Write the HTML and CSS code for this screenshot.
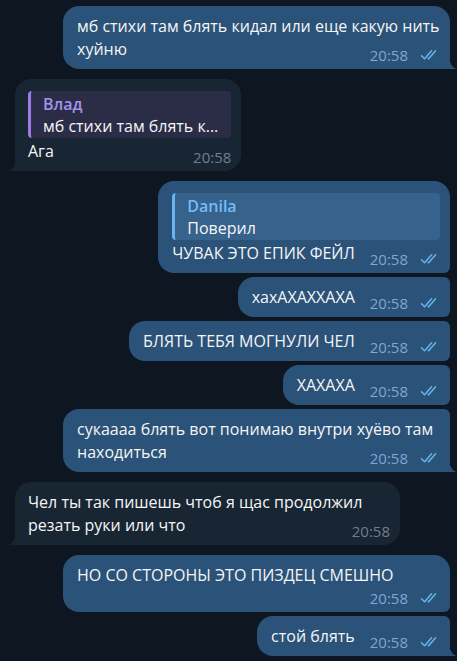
FILE: index.html
```html
<!DOCTYPE html>
<html lang="ru">
<head>
    <meta charset="UTF-8">
    <meta name="viewport" content="width=device-width, initial-scale=1.0">
    <title>Чат</title>
    <link rel="stylesheet" href="styles.css">
</head>
<body>
    <div class="chat">
        <div class="msg out single">
            <div class="bubble">
                <span class="text">мб стихи там блять кидал или еще какую нить хуйню</span>
                <span class="meta"><span class="time">20:58</span><svg class="checks" viewBox="0 0 20 12"><path d="M1.5 6.8 L4.6 9.8 L11.6 1.8"/><path d="M8.2 9.4 L8.6 9.8 L15.6 1.8"/></svg></span>
            </div>
        </div>

        <div class="msg in single group">
            <div class="bubble">
                <div class="reply">
                    <div class="reply-name">Влад</div>
                    <div class="reply-text">мб стихи там блять к...</div>
                </div>
                <span class="text">Ага</span>
                <span class="meta"><span class="time">20:58</span></span>
            </div>
        </div>

        <div class="msg out first group">
            <div class="bubble">
                <div class="reply">
                    <div class="reply-name">Danila</div>
                    <div class="reply-text">Поверил</div>
                </div>
                <span class="text">ЧУВАК ЭТО ЕПИК ФЕЙЛ</span>
                <span class="meta"><span class="time">20:58</span><svg class="checks" viewBox="0 0 20 12"><path d="M1.5 6.8 L4.6 9.8 L11.6 1.8"/><path d="M8.2 9.4 L8.6 9.8 L15.6 1.8"/></svg></span>
            </div>
        </div>
        <div class="msg out middle">
            <div class="bubble">
                <span class="text">хахАХАХХАХА</span>
                <span class="meta"><span class="time">20:58</span><svg class="checks" viewBox="0 0 20 12"><path d="M1.5 6.8 L4.6 9.8 L11.6 1.8"/><path d="M8.2 9.4 L8.6 9.8 L15.6 1.8"/></svg></span>
            </div>
        </div>
        <div class="msg out middle">
            <div class="bubble">
                <span class="text">БЛЯТЬ ТЕБЯ МОГНУЛИ ЧЕЛ</span>
                <span class="meta"><span class="time">20:58</span><svg class="checks" viewBox="0 0 20 12"><path d="M1.5 6.8 L4.6 9.8 L11.6 1.8"/><path d="M8.2 9.4 L8.6 9.8 L15.6 1.8"/></svg></span>
            </div>
        </div>
        <div class="msg out middle">
            <div class="bubble">
                <span class="text">ХАХАХА</span>
                <span class="meta"><span class="time">20:58</span><svg class="checks" viewBox="0 0 20 12"><path d="M1.5 6.8 L4.6 9.8 L11.6 1.8"/><path d="M8.2 9.4 L8.6 9.8 L15.6 1.8"/></svg></span>
            </div>
        </div>
        <div class="msg out last">
            <div class="bubble">
                <span class="text">сукаааа блять вот понимаю внутри хуёво там находиться</span>
                <span class="meta"><span class="time">20:58</span><svg class="checks" viewBox="0 0 20 12"><path d="M1.5 6.8 L4.6 9.8 L11.6 1.8"/><path d="M8.2 9.4 L8.6 9.8 L15.6 1.8"/></svg></span>
            </div>
        </div>

        <div class="msg in single group">
            <div class="bubble">
                <span class="text">Чел ты так пишешь чтоб я щас продолжил резать руки или что</span>
                <span class="meta"><span class="time">20:58</span></span>
            </div>
        </div>

        <div class="msg out first group">
            <div class="bubble">
                <span class="text">НО СО СТОРОНЫ ЭТО ПИЗДЕЦ СМЕШНО</span>
                <span class="meta wrapped"><span class="time">20:58</span><svg class="checks" viewBox="0 0 20 12"><path d="M1.5 6.8 L4.6 9.8 L11.6 1.8"/><path d="M8.2 9.4 L8.6 9.8 L15.6 1.8"/></svg></span>
            </div>
        </div>
        <div class="msg out last">
            <div class="bubble">
                <span class="text">стой блять</span>
                <span class="meta"><span class="time">20:58</span><svg class="checks" viewBox="0 0 20 12"><path d="M1.5 6.8 L4.6 9.8 L11.6 1.8"/><path d="M8.2 9.4 L8.6 9.8 L15.6 1.8"/></svg></span>
            </div>
        </div>
    </div>
</body>
</html>
```

FILE: styles.css
```css
body {
    margin: 0;
    background-color: #0e1621;
    font-family: "Open Sans", "Noto Sans", sans-serif;
    font-size: 16px;
    color: #f5f5f5;
}
.chat {
    display: flex;
    flex-direction: column;
    padding: 6px 7px 0 15px;
}
.msg {
    display: flex;
    margin-top: 4px;
}
.msg:first-child {
    margin-top: 0;
}
.msg.group {
    margin-top: 10px;
}
.msg.out {
    justify-content: flex-end;
}
.bubble {
    position: relative;
    box-sizing: border-box;
    max-width: 387px;
    padding: 9px 10px 6px 14px;
    border-radius: 16px;
    line-height: 23px;
}
.out .bubble {
    background-color: #2b5278;
}
.in .bubble {
    background-color: #182533;
    max-width: 385px;
    padding-left: 13px;
}

/* corners of grouped bubbles */
.out.first .bubble {
    border-bottom-right-radius: 6px;
}
.out.middle .bubble {
    border-top-right-radius: 6px;
    border-bottom-right-radius: 6px;
}
.out.last .bubble {
    border-top-right-radius: 6px;
    border-bottom-right-radius: 0;
}
.out.single .bubble {
    border-bottom-right-radius: 0;
}
.in.single .bubble {
    border-bottom-left-radius: 0;
}

/* tails */
.out.single .bubble::after,
.out.last .bubble::after {
    content: "";
    position: absolute;
    right: -7px;
    bottom: 0;
    width: 8px;
    height: 13px;
    background: radial-gradient(ellipse 8px 13px at right top, transparent 97%, #2b5278 100%);
}
.in.single .bubble::after {
    content: "";
    position: absolute;
    left: -7px;
    bottom: 0;
    width: 8px;
    height: 13px;
    background: radial-gradient(ellipse 8px 13px at left top, transparent 97%, #182533 100%);
}

.reply {
    margin: 3px 0 2px;
    padding: 2px 13px 1px 12px;
    border-left: 3px solid #9e7be3;
    border-radius: 4px;
    background-color: #2b2d46;
    line-height: 22px;
    white-space: nowrap;
}
.reply-name {
    font-weight: 600;
    color: #a593ec;
}
.out .reply {
    border-left-color: #6ab3f3;
    background-color: #36628c;
}
.out .reply-name {
    color: #75bbfb;
}

.meta {
    float: right;
    margin: 9px 0 0 15px;
    font-size: 15px;
    line-height: 16px;
    white-space: nowrap;
}
.meta.wrapped {
    margin-top: 3px;
}
.time {
    color: #7da8d3;
}
.in .time {
    color: #6d7f8f;
}
.checks {
    width: 20px;
    height: 12px;
    margin-left: 12px;
    vertical-align: 0;
    fill: none;
    stroke: #64b5ef;
    stroke-width: 1.5;
    stroke-linecap: round;
    stroke-linejoin: round;
}
```
